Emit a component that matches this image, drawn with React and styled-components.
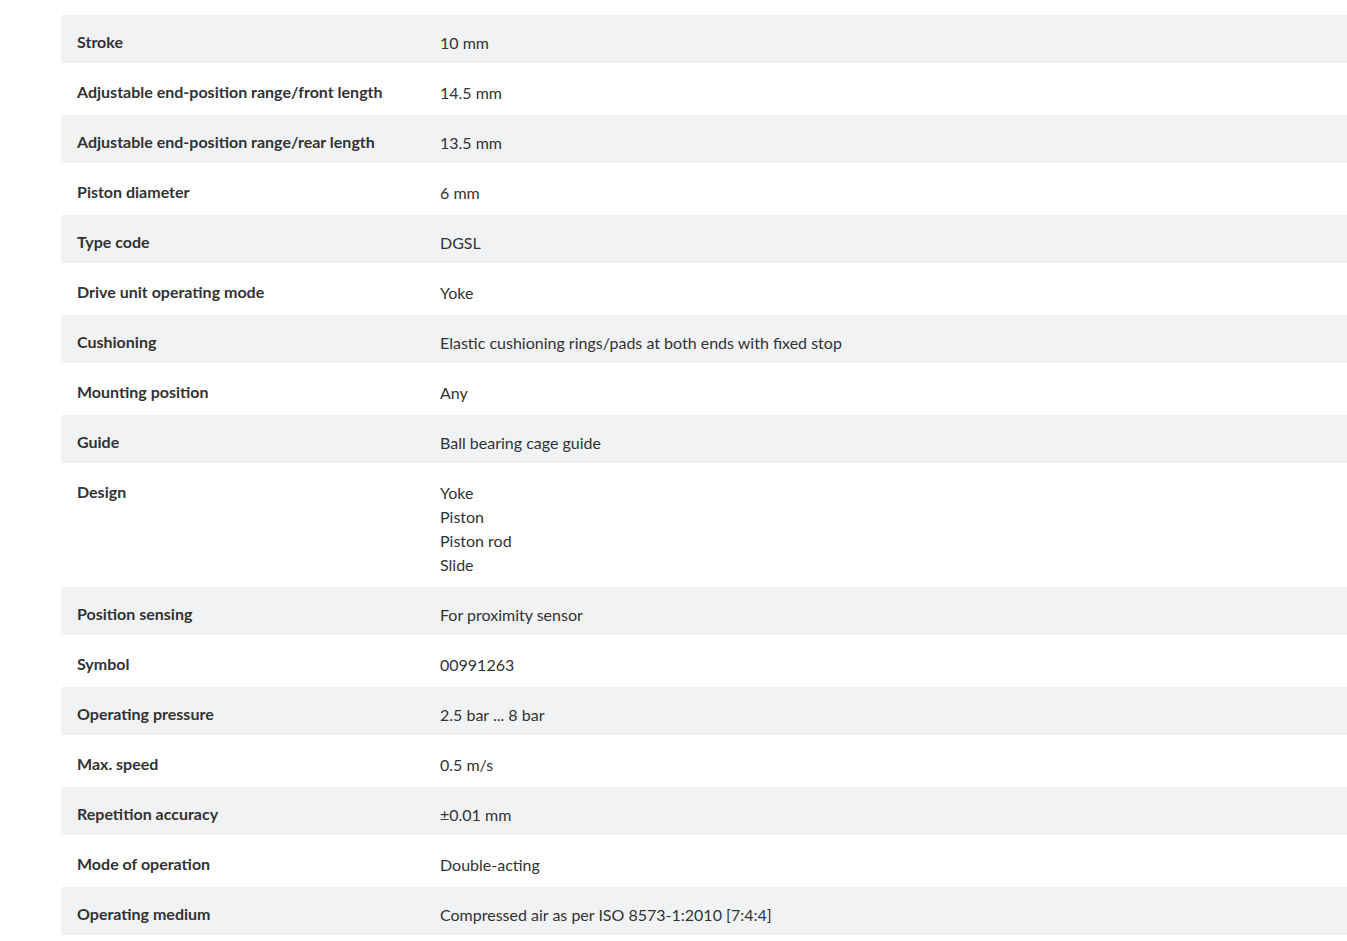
import React from "react";
import styled, { createGlobalStyle } from "styled-components";

const GlobalStyle = createGlobalStyle`
  body {
    margin: 0;
    background: #fff;
    font-family: Lato, "Open Sans", sans-serif;
    color: #333;
  }
`;

const Page = styled.div`
  padding: 13px 0 0 61px;
`;

const Table = styled.table`
  width: 100%;
  border-collapse: separate;
  border-spacing: 0 2px;
`;

const Row = styled.tr`
  background: ${(p) => (p.$shaded ? "#f1f2f3" : "#fff")};
`;

const Label = styled.td`
  width: 331px;
  padding: 15px 16px 9px;
  vertical-align: top;
  font-size: 16px;
  line-height: 24px;
  font-weight: 700;
  color: #333;
`;

const Value = styled.td`
  padding: 16px 16px 8px;
  vertical-align: top;
  font-size: 16px;
  line-height: 24px;
  font-weight: 400;
  color: #333;
`;

const Line = styled.div``;

const specs = [
  ["Stroke", ["10 mm"]],
  ["Adjustable end-position range/front length", ["14.5 mm"]],
  ["Adjustable end-position range/rear length", ["13.5 mm"]],
  ["Piston diameter", ["6 mm"]],
  ["Type code", ["DGSL"]],
  ["Drive unit operating mode", ["Yoke"]],
  ["Cushioning", ["Elastic cushioning rings/pads at both ends with fixed stop"]],
  ["Mounting position", ["Any"]],
  ["Guide", ["Ball bearing cage guide"]],
  ["Design", ["Yoke", "Piston", "Piston rod", "Slide"]],
  ["Position sensing", ["For proximity sensor"]],
  ["Symbol", ["00991263"]],
  ["Operating pressure", ["2.5 bar ... 8 bar"]],
  ["Max. speed", ["0.5 m/s"]],
  ["Repetition accuracy", ["±0.01 mm"]],
  ["Mode of operation", ["Double-acting"]],
  ["Operating medium", ["Compressed air as per ISO 8573-1:2010 [7:4:4]"]],
];

export default function App() {
  return (
    <>
      <GlobalStyle />
      <Page>
        <Table>
          <tbody>
            {specs.map(([label, values], i) => (
              <Row key={label} $shaded={i % 2 === 0}>
                <Label>{label}</Label>
                <Value>
                  {values.map((v) => (
                    <Line key={v}>{v}</Line>
                  ))}
                </Value>
              </Row>
            ))}
          </tbody>
        </Table>
      </Page>
    </>
  );
}
